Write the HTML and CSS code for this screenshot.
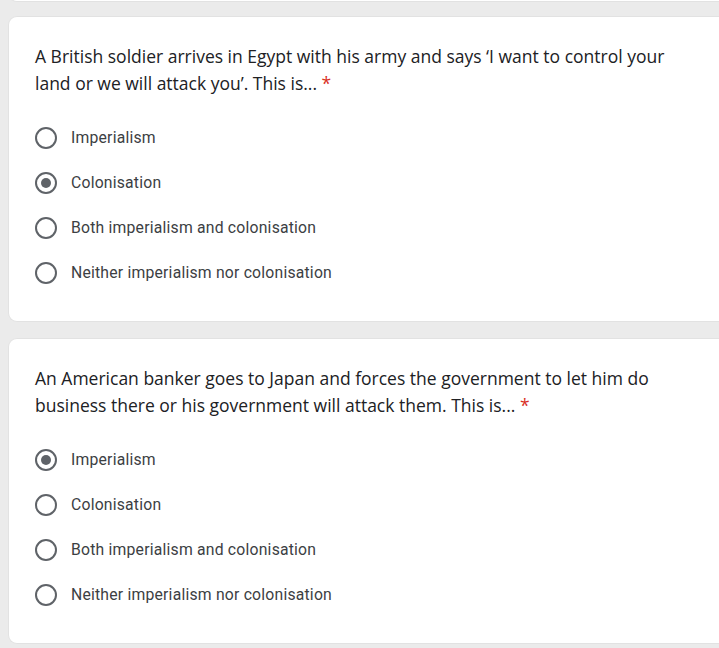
FILE: index.html
```html
<!DOCTYPE html>
<html lang="en">
<head>
<meta charset="utf-8">
<link rel="stylesheet" href="styles.css">
</head>
<body>
<div class="page">
  <div class="prev-card"></div>

  <div class="card">
    <div class="question">A British soldier arrives in Egypt with his army and says ‘I want to control your land or we will attack you’. This is...&nbsp;<span class="req">*</span></div>
    <div class="options">
      <div class="option"><span class="radio"></span><span class="label">Imperialism</span></div>
      <div class="option"><span class="radio checked"></span><span class="label">Colonisation</span></div>
      <div class="option"><span class="radio"></span><span class="label">Both imperialism and colonisation</span></div>
      <div class="option"><span class="radio"></span><span class="label">Neither imperialism nor colonisation</span></div>
    </div>
  </div>

  <div class="card">
    <div class="question">An American banker goes to Japan and forces the government to let him do business there or his government will attack them. This is...&nbsp;<span class="req">*</span></div>
    <div class="options">
      <div class="option"><span class="radio checked"></span><span class="label">Imperialism</span></div>
      <div class="option"><span class="radio"></span><span class="label">Colonisation</span></div>
      <div class="option"><span class="radio"></span><span class="label">Both imperialism and colonisation</span></div>
      <div class="option"><span class="radio"></span><span class="label">Neither imperialism nor colonisation</span></div>
    </div>
  </div>
</div>
</body>
</html>
```

FILE: styles.css
```css
html, body {
  margin: 0;
  padding: 0;
}
body {
  background: #ebebeb;
  overflow: hidden;
  width: 719px;
  height: 648px;
}
.page {
  display: flex;
  flex-direction: column;
  gap: 16px;
  padding-left: 8px;
  margin-right: -20px;
  margin-top: -17px;
}
.prev-card {
  height: 18px;
  margin-bottom: -2px;
  background: #fff;
  border-radius: 0 0 0 9px;
  border: 1px solid #e2e2e2;
  border-top: none;
  border-right: none;
}
.card {
  background: #fff;
  border-radius: 9px 0 0 9px;
  border: 1px solid #e2e2e2;
  border-right: none;
  padding: 26px 27px 26px 26px;
  display: flex;
  flex-direction: column;
  gap: 18px;
}
.question {
  font-family: "Open Sans", "Liberation Sans", sans-serif;
  font-size: 17.5px;
  line-height: 27px;
  color: #202124;
  width: 650px;
}
.req {
  color: #d93025;
}
.options {
  display: flex;
  flex-direction: column;
}
.option {
  height: 45px;
  display: flex;
  align-items: center;
  gap: 14px;
}
.radio {
  box-sizing: border-box;
  width: 22px;
  height: 22px;
  border: 2px solid #5f6368;
  border-radius: 50%;
  display: flex;
  align-items: center;
  justify-content: center;
  flex: none;
}
.radio.checked::after {
  content: "";
  width: 10px;
  height: 10px;
  border-radius: 50%;
  background: #5f6368;
}
.label {
  font-family: Roboto, "Liberation Sans", sans-serif;
  font-size: 15.75px;
  letter-spacing: 0.2px;
  color: #3c4043;
}
```
